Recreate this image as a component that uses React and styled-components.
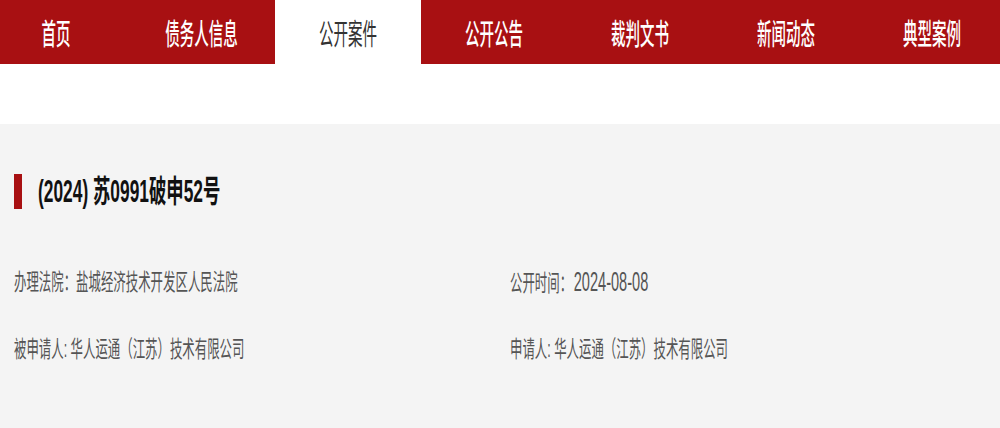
import React from "react";
import styled, { createGlobalStyle } from "styled-components";

const GlobalStyle = createGlobalStyle`
  html, body {
    margin: 0;
    padding: 0;
    background: #f4f4f4;
    overflow: hidden;
  }
  body {
    font-family: "Liberation Sans", "Noto Sans CJK SC", sans-serif;
  }
`;

const NAV_ITEMS = ["首页", "债务人信息", "公开案件", "公开公告", "裁判文书", "新闻动态", "典型案例"];
const ACTIVE = 2;

const Page = styled.div`
  width: 1000px;
  height: 428px;
  overflow: hidden;
  background: #f4f4f4;
`;

const NavBar = styled.nav`
  height: 64px;
  background: #a81012;
  display: flex;
  margin-left: -17px;
`;

const NavItem = styled.div`
  flex: 0 0 146px;
  height: 64px;
  display: flex;
  align-items: center;
  justify-content: center;
  background: ${p => (p.active ? "#ffffff" : "transparent")};
  color: ${p => (p.active ? "#333333" : "#ffffff")};
  font-family: "Noto Sans CJK SC", sans-serif;
  font-size: 29px;
  font-weight: ${p => (p.active ? 400 : 500)};
  white-space: nowrap;
`;

const Squeeze = styled.span`
  display: inline-block;
  white-space: nowrap;
  transform: scaleX(${p => p.k});
  transform-origin: ${p => p.origin || "left"} center;
`;

const WhiteBand = styled.div`
  height: 60px;
  background: #ffffff;
`;

const Content = styled.section`
  padding: 50px 14px 0;
`;

const TitleRow = styled.div`
  display: flex;
  align-items: center;
  gap: 16px;
  height: 35px;
`;

const TitleBar = styled.div`
  width: 8px;
  height: 35px;
  background: #a81012;
`;

const Title = styled.h1`
  margin: 0;
  font-size: 31px;
  font-weight: 700;
  color: #111111;
  line-height: 35px;
`;

const InfoGrid = styled.div`
  display: grid;
  grid-template-columns: 496px 1fr;
  row-gap: 35px;
  margin-top: 57px;
`;

const InfoItem = styled.div`
  font-size: 23px;
  color: #555555;
  line-height: 32px;
  height: 32px;
`;

const Value = styled.span`
  font-size: ${p => (p.numeric ? "27px" : "inherit")};
  margin-left: ${p => (p.numeric ? "3px" : "0")};
`;

const info = [
  { label: "办理法院：", value: "盐城经济技术开发区人民法院" },
  { label: "公开时间：", value: "2024-08-08", numeric: true },
  { label: "被申请人: ", value: "华人运通（江苏）技术有限公司" },
  { label: "申请人: ", value: "华人运通（江苏）技术有限公司" },
];

const App = () => {
  return (
    <Page>
      <GlobalStyle />
      <NavBar>
        {NAV_ITEMS.map((item, i) => (
          <NavItem key={item} active={i === ACTIVE}>
            <Squeeze k={0.5} origin="center">{item}</Squeeze>
          </NavItem>
        ))}
      </NavBar>
      <WhiteBand />
      <Content>
        <TitleRow>
          <TitleBar />
          <Title>
            <Squeeze k={0.56}>(2024) 苏0991破申52号</Squeeze>
          </Title>
        </TitleRow>
        <InfoGrid>
          {info.map(item => (
            <InfoItem key={item.label}>
              <Squeeze k={0.54}>
                {item.label}
                <Value numeric={item.numeric}>{item.value}</Value>
              </Squeeze>
            </InfoItem>
          ))}
        </InfoGrid>
      </Content>
    </Page>
  );
};

export default App;
